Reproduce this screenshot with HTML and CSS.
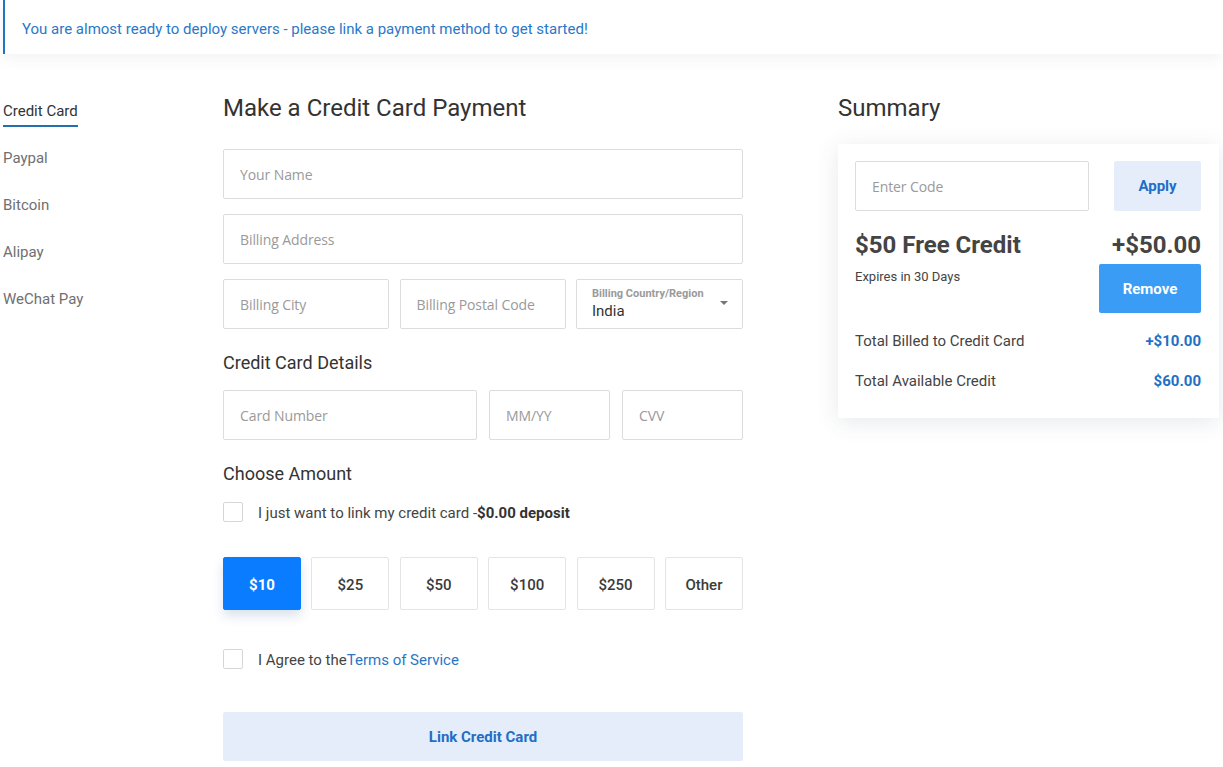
FILE: index.html
```html
<!DOCTYPE html>
<html>
<head>
<meta charset="utf-8">
<link rel="stylesheet" href="styles.css">
</head>
<body>
<div class="banner">You are almost ready to deploy servers - please link a payment method to get started!</div>
<div class="layout">
  <nav class="tabs">
    <div class="tab active">Credit Card</div>
    <div class="tab">Paypal</div>
    <div class="tab">Bitcoin</div>
    <div class="tab">Alipay</div>
    <div class="tab">WeChat Pay</div>
  </nav>
  <main class="form">
    <h1 class="title">Make a Credit Card Payment</h1>
    <div class="field"><span class="ph">Your Name</span></div>
    <div class="field"><span class="ph">Billing Address</span></div>
    <div class="row3">
      <div class="field"><span class="ph">Billing City</span></div>
      <div class="field"><span class="ph">Billing Postal Code</span></div>
      <div class="field select">
        <div class="sel-text">
          <span class="sel-label">Billing Country/Region</span>
          <span class="sel-value">India</span>
        </div>
        <span class="caret"></span>
      </div>
    </div>
    <h2 class="sub">Credit Card Details</h2>
    <div class="cardrow">
      <div class="field"><span class="ph">Card Number</span></div>
      <div class="field"><span class="ph">MM/YY</span></div>
      <div class="field"><span class="ph">CVV</span></div>
    </div>
    <h2 class="sub sub2">Choose Amount</h2>
    <label class="check"><span class="box"></span><span>I just want to link my credit card -<b>$0.00 deposit</b></span></label>
    <div class="amounts">
      <div class="amt selected">$10</div>
      <div class="amt">$25</div>
      <div class="amt">$50</div>
      <div class="amt">$100</div>
      <div class="amt">$250</div>
      <div class="amt">Other</div>
    </div>
    <label class="check agree"><span class="box"></span><span>I Agree to the<a class="link">Terms of Service</a></span></label>
    <div class="submit">Link Credit Card</div>
  </main>
  <aside class="summary">
    <h1 class="title">Summary</h1>
    <div class="card">
      <div class="coderow">
        <div class="field code"><span class="ph">Enter Code</span></div>
        <div class="apply">Apply</div>
      </div>
      <div class="credit">
        <div class="credit-left">
          <div class="credit-name">$50 Free Credit</div>
          <div class="expires">Expires in 30 Days</div>
        </div>
        <div class="credit-right">
          <div class="credit-amt">+$50.00</div>
          <div class="remove">Remove</div>
        </div>
      </div>
      <div class="line"><span>Total Billed to Credit Card</span><b>+$10.00</b></div>
      <div class="line"><span>Total Available Credit</span><b>$60.00</b></div>
    </div>
  </aside>
</div>
</body>
</html>
```

FILE: styles.css
```css
* { box-sizing: border-box; }
html, body { margin: 0; padding: 0; background: #fff; }
body {
  font-family: Roboto, "Liberation Sans", Arial, sans-serif;
  color: #333;
  width: 1223px;
  height: 767px;
  overflow: hidden;
}
.banner {
  margin-left: 3px;
  height: 54px;
  border-left: 2px solid #1f74c6;
  background: #fff;
  color: #2a78c8;
  font-size: 15px;
  display: flex;
  align-items: center;
  padding-left: 17px;
  padding-top: 4px;
  box-shadow: 0 4px 14px rgba(60, 70, 90, 0.07);
  position: relative;
}
.layout {
  display: flex;
  align-items: flex-start;
  padding-left: 3px;
  padding-top: 38px;
}
.tabs { display: flex; flex-direction: column; width: 220px; flex: none; }
.form { width: 520px; flex: none; display: flex; flex-direction: column; }
.summary { width: 381px; flex: none; margin-left: 95px; }
.tab {
  font-size: 15px;
  color: #707070;
  height: 47px;
  line-height: 38px;
  align-self: flex-start;
}
.tab.active {
  color: #333;
  position: relative;
}
.tab.active::after {
  content: "";
  position: absolute;
  left: 0; right: 0;
  top: 33px;
  height: 2px;
  background: #2470ad;
}
.title {
  font-size: 24px;
  font-weight: 400;
  margin: 0 0 27px 0;
  line-height: 30px;
  padding-top: 1px;
  height: 30px;
  color: #333;
}
.field {
  height: 50px;
  border: 1px solid #dcdcdc;
  border-radius: 2px;
  display: flex;
  align-items: center;
  padding-left: 16px;
  background: #fff;
  margin-bottom: 15px;
}
.ph {
  font-family: "Open Sans", "Liberation Sans", sans-serif;
  font-size: 14px;
  color: #9a9a9a;
  letter-spacing: -0.1px;
}
.row3 {
  display: grid;
  grid-template-columns: 166px 166px 167px;
  column-gap: 10.5px;
}
.row3 .field { margin-bottom: 0; }
.select { padding-left: 15px; padding-right: 14px; justify-content: space-between; }
.sel-text { display: flex; flex-direction: column; }
.sel-label { font-size: 11px; font-weight: 700; color: #9a9a9a; line-height: 13px; margin-top: -1px; }
.sel-value { font-size: 15px; color: #333; line-height: 19px; margin-top: 2px; }
.caret {
  width: 0; height: 0;
  border-left: 4px solid transparent;
  border-right: 4px solid transparent;
  border-top: 4px solid #777;
  margin-top: -2px;
}
.sub {
  font-size: 18px;
  font-weight: 400;
  margin: 23px 0 16px 0;
  line-height: 22px;
  color: #333;
}
.sub2 { margin-top: 23px; margin-bottom: 17px; }
.cardrow {
  display: grid;
  grid-template-columns: 254px 121px 121px;
  column-gap: 12px;
}
.cardrow .field { margin-bottom: 0; }
.check {
  display: flex;
  align-items: center;
  font-size: 15px;
  color: #444;
  height: 20px;
  line-height: 20px;
}
.check > span:last-child { padding-top: 2px; }
.check b { font-weight: 700; color: #333; }
.box {
  width: 20px; height: 20px;
  border: 1px solid #d6d6d6;
  border-radius: 2px;
  margin-right: 15px;
  background: #fff;
}
.amounts {
  display: grid;
  grid-template-columns: repeat(6, 78px);
  column-gap: 10.4px;
  margin-top: 35px;
}
.amt {
  height: 53px;
  border: 1px solid #e4e4e4;
  border-radius: 2px;
  display: flex;
  align-items: center;
  justify-content: center;
  font-size: 15px;
  font-weight: 500;
  color: #3a3a3a;
  background: #fff;
  padding-top: 2px;
}
.amt.selected {
  background: #0a7cff;
  border-color: #0a7cff;
  color: #fff;
  font-weight: 700;
  box-shadow: 0 6px 12px rgba(10, 60, 140, 0.15);
}
.agree { margin-top: 39px; }
.link { color: #2a76c6; }
.submit {
  margin-top: 43px;
  height: 49px;
  background: #e5edfb;
  border-radius: 2px;
  display: flex;
  align-items: center;
  justify-content: center;
  font-size: 15px;
  font-weight: 700;
  color: #1e6fc5;
}
.summary .title { margin-bottom: 22px; }
.card {
  background: #fff;
  box-shadow: 0 4px 22px rgba(60, 70, 100, 0.12);
  padding: 17px 18px 18px 17px;
  height: 274px;
}
.coderow {
  display: flex;
  justify-content: space-between;
}
.code { width: 234px; margin-bottom: 0; }
.apply {
  width: 87px;
  height: 50px;
  background: #e5edfb;
  border-radius: 2px;
  display: flex;
  align-items: center;
  justify-content: center;
  font-size: 15px;
  font-weight: 700;
  color: #1e6fc5;
}
.credit {
  display: flex;
  justify-content: space-between;
  margin-top: 19px;
}
.credit-name { font-size: 24px; font-weight: 700; color: #444; line-height: 30px; }
.expires { font-size: 13px; color: #444; margin-top: 9px; }
.credit-right { display: flex; flex-direction: column; align-items: flex-end; }
.credit-amt { font-size: 24px; font-weight: 700; color: #444; line-height: 30px; }
.remove {
  margin-top: 4px;
  width: 102px;
  height: 49px;
  background: #3a9cf4;
  border-radius: 2px;
  color: #fff;
  font-size: 15px;
  font-weight: 700;
  display: flex;
  align-items: center;
  justify-content: center;
}
.line {
  display: flex;
  justify-content: space-between;
  font-size: 15px;
  color: #444;
  height: 40px;
  align-items: center;
}
.credit + .line { margin-top: 8px; }
.line b { color: #2270c4; font-weight: 700; }
```
